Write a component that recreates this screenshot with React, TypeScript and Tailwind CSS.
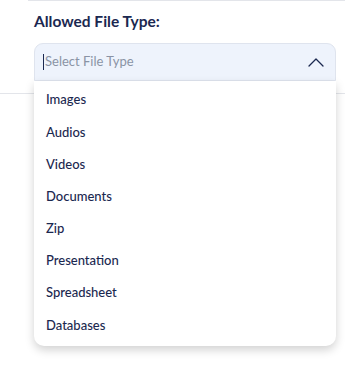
import React from "react";

const NAVY = "#1b2850";

const fileTypes = [
  "Images",
  "Audios",
  "Videos",
  "Documents",
  "Zip",
  "Presentation",
  "Spreadsheet",
  "Databases",
];

const App = () => {
  return (
    <div className="w-[347px] h-[372px] bg-white font-['Lato',sans-serif]">
      <div className="ml-[28px] mr-[2px] border-t border-[#e3e5ea]" />

      <h3 className="pl-[34px] pt-[10px] text-[15.5px] leading-[20px] font-bold" style={{ color: NAVY }}>
        Allowed File Type:
      </h3>

      <div className="relative ml-[34px] mt-[12px] w-[302px]">
        <div className="flex h-[38px] items-center justify-between rounded-t-[9px] border border-[#dfe4ee] bg-[#eef3fc] pl-[8px] pr-[11px]">
          <span className="flex items-center">
            <span className="h-[16px] w-px bg-[#1b2850]" />
            <span className="ml-[1px] text-[13px] text-[#8a93a5]">Select File Type</span>
          </span>
          <svg width="16" height="9" viewBox="0 0 16 9" fill="none">
            <path d="M1 8 L8 1 L15 8" stroke={NAVY} strokeWidth="1.3" strokeLinecap="round" strokeLinejoin="round" />
          </svg>
        </div>

        <ul className="absolute left-0 top-full z-10 w-full rounded-b-[10px] bg-white pt-[3px] pb-[4px] shadow-[0_4px_10px_rgba(0,0,0,0.18)]">
          {fileTypes.map((type) => (
            <li
              key={type}
              className="flex h-[32.2px] items-center pl-[12px] text-[13px] font-medium"
              style={{ color: NAVY }}
            >
              {type}
            </li>
          ))}
        </ul>
      </div>

      <div className="mt-[12px] w-[345px] border-t border-[#e3e5ea]" />
    </div>
  );
};

export default App;
